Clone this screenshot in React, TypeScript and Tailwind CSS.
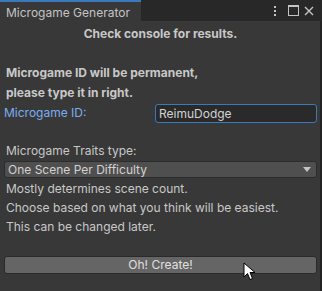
import React from "react";

export default function App() {
  return (
    <div
      className="w-[322px] h-[291px] flex flex-col bg-[#383838] text-[#c8c8c8] text-[12px] overflow-hidden relative"
      style={{ fontFamily: "Inter, 'Noto Sans', sans-serif" }}
    >
      {/* tab bar */}
      <div className="h-[21px] flex bg-[#282828] shrink-0">
        <div className="w-[141px] bg-[#383838] border-t-2 border-[#3a79bb] pl-[6px] pt-[2px] text-[12px] text-[#c4c4c4] leading-[17px]">
          Microgame Generator
        </div>
        <div className="flex-1" />
        <div className="flex items-center pr-[8px] text-[#c4c4c4]">
          <svg width="4" height="12" viewBox="0 0 4 12">
            <rect x="1" y="1" width="2" height="2" fill="#c4c4c4" />
            <rect x="1" y="5" width="2" height="2" fill="#c4c4c4" />
            <rect x="1" y="9" width="2" height="2" fill="#c4c4c4" />
          </svg>
          <svg className="ml-[11px]" width="11" height="11" viewBox="0 0 11 11">
            <rect x="0.5" y="0.5" width="10" height="10" fill="none" stroke="#c4c4c4" />
            <rect x="0" y="0" width="11" height="2" fill="#c4c4c4" />
          </svg>
          <svg className="ml-[5px]" width="10" height="10" viewBox="0 0 10 10">
            <path d="M1 1 L9 9 M9 1 L1 9" stroke="#c4c4c4" strokeWidth="1.4" />
          </svg>
        </div>
      </div>

      {/* body */}
      <div className="flex-1 flex flex-col pl-[4px] pr-[3px] border-r-2 border-[#232323]">
        <div className="text-center font-bold mt-[3px] h-[20px] leading-[20px]">Check console for results.</div>
        <div className="h-[19px]" />
        <div className="font-bold pl-[2px] leading-[20px]">Microgame ID will be permanent,</div>
        <div className="font-bold pl-[2px] leading-[20px]">please type it in right.</div>
        <div className="flex items-center h-[20px]">
          <span className="w-[151px] text-[#7baef0]">Microgame ID:</span>
          <div className="flex-1 h-[19px] bg-[#2a2a2a] border border-[#3a79bb] rounded-[3px] pl-[3px] leading-[17px] text-[#d2d2d2]">
            ReimuDodge
          </div>
        </div>
        <div className="h-[18px]" />
        <div className="pl-[2px] leading-[20px]">Microgame Traits type:</div>
        <div className="h-[17px] bg-[#4f4f4f] border border-[#2c2c2c] rounded-[3px] flex items-center justify-between pl-[3px] pr-[5px] text-[#d2d2d2] leading-[15px]">
          <span>One Scene Per Difficulty</span>
          <svg width="8" height="5" viewBox="0 0 8 5">
            <path d="M0 0 H8 L4 5 Z" fill="#c4c4c4" />
          </svg>
        </div>
        <div className="pl-[2px] leading-[19px] mt-[1px]">Mostly determines scene count.</div>
        <div className="pl-[2px] leading-[19px]">Choose based on what you think will be easiest.</div>
        <div className="pl-[2px] leading-[19px]">This can be changed later.</div>
        <div className="h-[20px]" />
        <div className="h-[18px] bg-[#656565] border border-[#2a2a2a] rounded-[3px] flex items-center justify-center text-[#e0e0e0] leading-[16px]">
          Oh! Create!
        </div>
      </div>

      {/* mouse cursor */}
      <svg className="absolute left-[243px] top-[262px]" width="14" height="20" viewBox="0 0 14 20">
        <path d="M1 1 L1 15 L4.5 11.5 L7 17.5 L9.5 16.5 L7 10.5 L12 10.5 Z" fill="#ffffff" stroke="#000000" strokeWidth="1" strokeLinejoin="miter" />
      </svg>
    </div>
  );
}
